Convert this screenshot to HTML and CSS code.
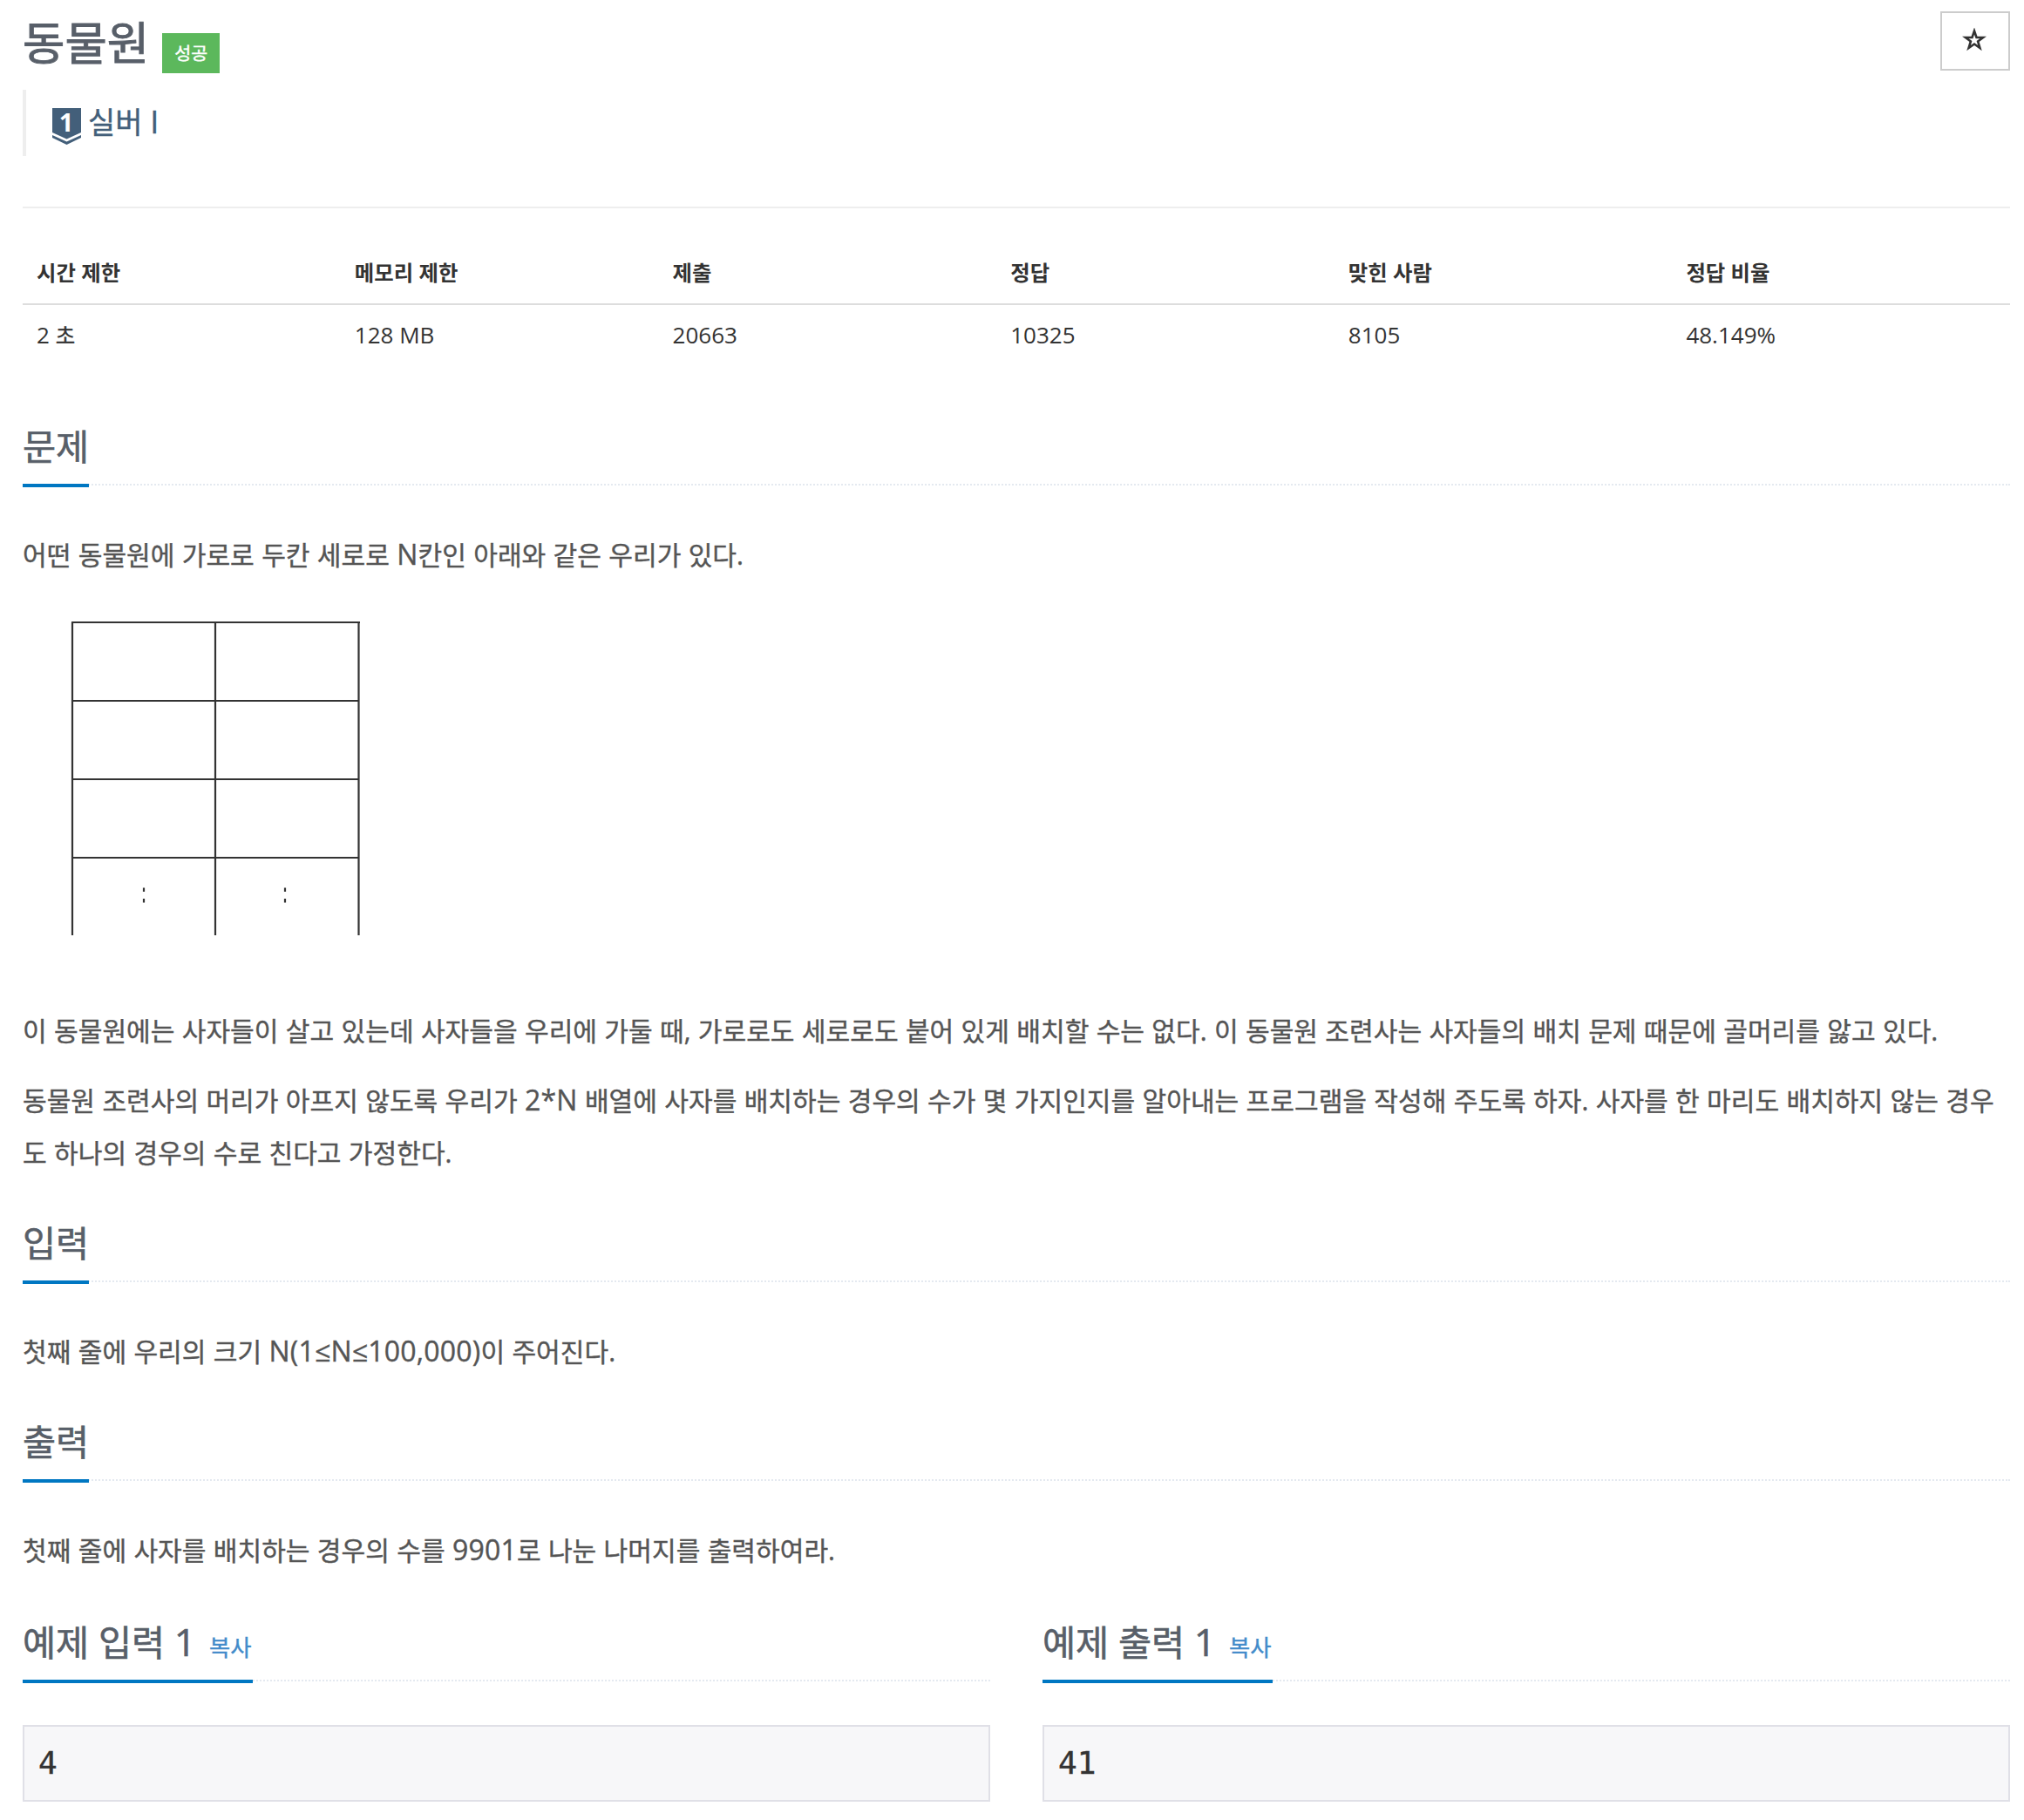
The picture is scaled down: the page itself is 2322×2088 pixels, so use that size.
FILE: index.html
```html
<!DOCTYPE html>
<html lang="ko">

<head>
    <meta charset="UTF-8">
    <meta name="viewport" content="width=device-width, initial-scale=1.0">
    <title>동물원</title>
    <link rel="stylesheet" href="styles.css">
</head>

<body>
    <div class="container">
        <!-- 문제 제목 -->
        <div class="page-header">
            <h1>동물원</h1>
            <span class="label-success">성공</span>
            <button class="btn-star" aria-label="즐겨찾기">
                <svg width="28" height="28" viewBox="0 0 28 28">
                    <path d="M14 3.5L16.5 11H24.2L18.1 15.5L20.4 23L14 18.5L7.6 23L9.9 15.5L3.8 11H11.5Z" />
                </svg>
            </button>
        </div>

        <blockquote class="tier">
            <svg class="tier-icon" width="33" height="42" viewBox="0 0 33 42">
                <path d="M0 0H33V28L16.5 35.5L0 28Z" />
                <path d="M0 31L16.5 38.5L33 31V34L16.5 42L0 34Z" />
                <text x="16" y="27">1</text>
            </svg>
            <span class="tier-name">실버 <span class="en">I</span></span>
        </blockquote>

        <hr>

        <!-- 문제 정보 -->
        <table class="info">
            <thead>
                <tr>
                    <th class="w16">시간 제한</th>
                    <th class="w16">메모리 제한</th>
                    <th class="w17">제출</th>
                    <th class="w17">정답</th>
                    <th class="w17">맞힌 사람</th>
                    <th class="w17">정답 비율</th>
                </tr>
            </thead>
            <tbody>
                <tr>
                    <td>2 <span class="ko">초</span></td>
                    <td>128 MB</td>
                    <td>20663</td>
                    <td>10325</td>
                    <td>8105</td>
                    <td>48.149%</td>
                </tr>
            </tbody>
        </table>

        <!-- 문제 본문 -->
        <section>
            <div class="headline">
                <h2>문제</h2>
            </div>
            <p>어떤 동물원에 가로로 두칸 세로로 <span class="en">N</span>칸인 아래와 같은 우리가 있다.</p>
            <div class="figure">
                <svg width="400" height="446" viewBox="0 0 400 446">
                    <path d="M56 27H387M57 117H386M57 207H386M57 297H386" />
                    <path d="M57 27V386M221 27V386M385.5 27V386" />
                    <path d="M139 331.5V336M139 344V348.5M301 331.5V336M301 344V348.5" />
                </svg>
            </div>
            <p>이 동물원에는 사자들이 살고 있는데 사자들을 우리에 가둘 때, 가로로도 세로로도 붙어 있게 배치할 수는 없다. 이 동물원 조련사는 사자들의 배치 문제 때문에 골머리를 앓고 있다.</p>
            <p>동물원 조련사의 머리가 아프지 않도록 우리가 <span class="en">2*N</span> 배열에 사자를 배치하는 경우의 수가 몇 가지인지를 알아내는 프로그램을 작성해 주도록 하자. 사자를 한 마리도 배치하지 않는 경우도 하나의 경우의 수로 친다고 가정한다.</p>
        </section>

        <section>
            <div class="headline">
                <h2>입력</h2>
            </div>
            <p>첫째 줄에 우리의 크기 <span class="en">N(1≤N≤100,000)</span>이 주어진다.</p>
        </section>

        <section>
            <div class="headline">
                <h2>출력</h2>
            </div>
            <p>첫째 줄에 사자를 배치하는 경우의 수를 <span class="en">9901</span>로 나눈 나머지를 출력하여라.</p>
        </section>

        <!-- 예제 -->
        <div class="sample">
            <section>
                <div class="headline">
                    <h2>예제 입력 <span class="en">1</span> <a class="copy">복사</a></h2>
                </div>
                <pre>4</pre>
            </section>
            <section>
                <div class="headline">
                    <h2>예제 출력 <span class="en">1</span> <a class="copy">복사</a></h2>
                </div>
                <pre>41</pre>
            </section>
        </div>
    </div>
</body>

</html>
```
FILE: styles.css
```css
* {
    box-sizing: border-box;
}

body {
    margin: 0;
    background-color: #fff;
    color: #333;
    font-family: "Open Sans", "Noto Sans CJK KR", sans-serif;
    font-size: 26px;
}

h1,
h2,
p,
pre,
blockquote {
    margin: 0;
    font-weight: 400;
}

h1,
h2,
p,
.label-success,
.tier-name,
.ko,
pre {
    -webkit-text-stroke: 0.4px;
}

.container {
    padding: 0 16px 0 26px;
}

.page-header {
    display: flex;
    align-items: flex-start;
    height: 103px;
    padding-top: 13px;
}

h1 {
    margin-top: 5px;
    color: #585f69;
    font-size: 52.6px;
    line-height: 62px;
    -webkit-text-stroke-width: 0.9px;
}

.label-success {
    width: 66px;
    height: 46px;
    margin: 25px 0 0 15px;
    background-color: #5cb85c;
    color: #fff;
    font-size: 20.7px;
    line-height: 47px;
    text-align: center;
}

.btn-star {
    display: flex;
    align-items: center;
    justify-content: center;
    width: 80px;
    height: 68px;
    margin-left: auto;
    padding: 0 2px 2px 0;
    border: 2px solid #ccc;
    background-color: #fff;
}

.btn-star path {
    fill: none;
    stroke: #333;
    stroke-width: 2.6;
}

.tier {
    display: flex;
    align-items: center;
    height: 76px;
    padding-left: 30px;
    border-left: 4px solid #eee;
    color: #435f7a;
    font-size: 33.9px;
    line-height: 48px;
}

.tier-icon {
    overflow: visible;
    margin: 8px 8px 0 0;
    fill: #435f7a;
}

.tier-icon text {
    fill: #fff;
    font-size: 29px;
    font-weight: 700;
    line-height: 1;
    text-anchor: middle;
}

.tier-name {
    margin-bottom: 2px;
}

/* 한글과 같은 줄에 오는 영문, 숫자 */
.en {
    font-size: 1.064em;
    letter-spacing: 0.2px;
    line-height: 1;
}

.ko {
    font-size: 24.4px;
}

hr {
    height: 2px;
    margin: 58px 0 40px;
    border: 0;
    background-color: #eee;
}

.info {
    width: 100%;
    border-collapse: separate;
    border-spacing: 0;
    table-layout: fixed;
}

.info th,
.info td {
    height: 69px;
    padding: 0 16px;
    line-height: 37px;
    text-align: left;
}

.info th {
    height: 71px;
    padding-bottom: 2px;
    border-bottom: 2px solid #ddd;
    font-size: 24.4px;
}

.w16 {
    width: 16%;
}

.w17 {
    width: 17%;
}

.headline {
    display: flex;
    height: 78px;
    margin: 40px 0 50px;
    border-bottom: 2px dotted #e4e9f0;
}

.info + section .headline {
    margin-top: 60px;
}

h2 {
    height: 80px;
    border-bottom: 4px solid #0077c2;
    color: #585f69;
    font-size: 41.4px;
    line-height: 66px;
    -webkit-text-stroke-width: 0.6px;
}

.copy {
    margin: 0 1.5px 0 4px;
    color: #428bca;
    font-size: 26.3px;
    line-height: 1;
    -webkit-text-stroke-width: 0.4px;
}

p {
    color: #555;
    font-size: 30.1px;
    line-height: 60px;
    word-spacing: 0.5px;
}

p + p {
    margin-top: 20px;
}

.figure {
    height: 446px;
    margin: 20px 0;
}

.figure svg {
    display: block;
}

.figure path {
    fill: none;
    stroke: #333;
    stroke-width: 2.2;
}

.sample {
    display: grid;
    grid-template-columns: 1fr 1fr;
    column-gap: 60px;
    padding-top: 2px;
}

pre {
    height: 88px;
    padding: 0 16px;
    border: 2px solid #e0e0e7;
    background-color: #f7f7f9;
    font-family: "DejaVu Sans Mono", monospace;
    font-size: 36px;
    line-height: 84px;
}
```
